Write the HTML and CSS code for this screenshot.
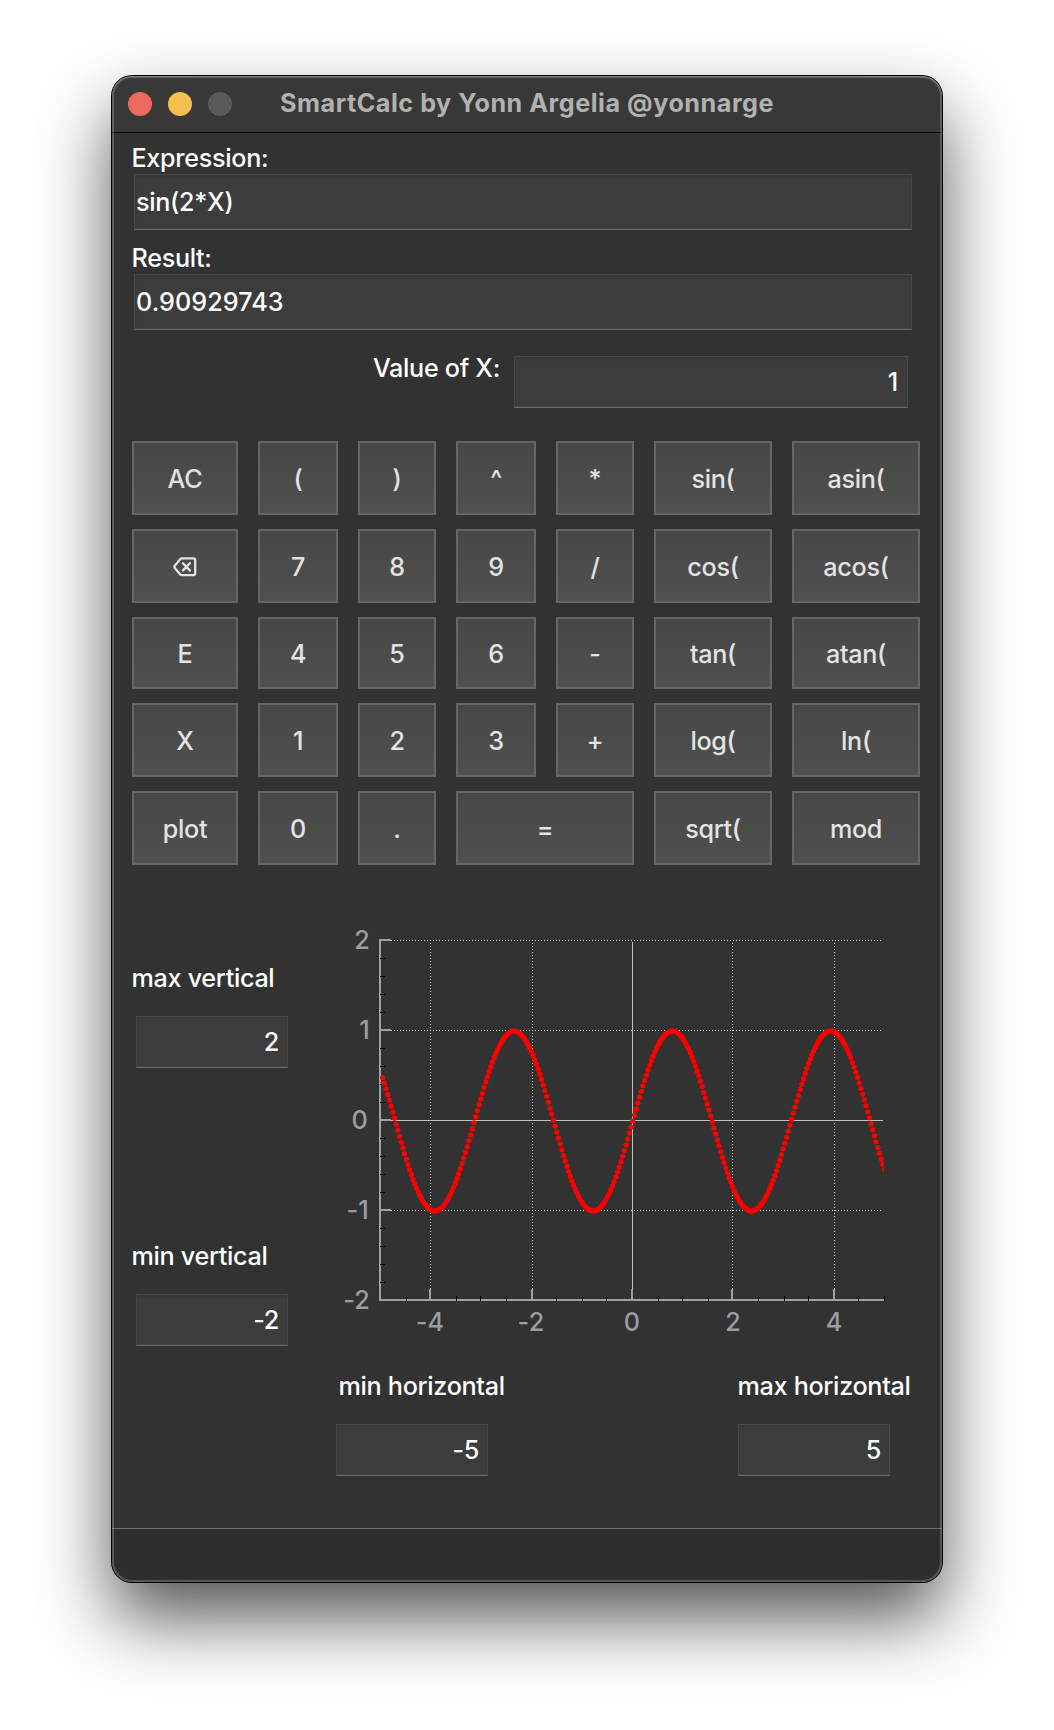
FILE: index.html
```html
<!DOCTYPE html>
<html lang="en">
<head>
<meta charset="utf-8">
<title>SmartCalc</title>
<link rel="stylesheet" href="styles.css">
</head>
<body>
<main class="window">
  <header class="titlebar">
    <span class="light light-close"></span>
    <span class="light light-min"></span>
    <span class="light light-off"></span>
    <h1 class="title">SmartCalc by Yonn Argelia @yonnarge</h1>
  </header>

  <div class="content">
    <section class="entry">
      <label class="label">Expression:</label>
      <div class="field field-wide">sin(2*X)</div>
    </section>
    <section class="entry">
      <label class="label">Result:</label>
      <div class="field field-wide"><span class="number">0.90929743</span></div>
    </section>
    <section class="x-row">
      <label class="label">Value of X:</label>
      <div class="field field-right field-x">1</div>
    </section>

    <section class="keypad">
      <button class="key">AC</button><button class="key">(</button><button class="key">)</button><button class="key">^</button><button class="key">*</button><button class="key">sin(</button><button class="key">asin(</button>
      <button class="key" aria-label="Backspace"><svg class="erase" width="24" height="20" viewBox="0 0 24 20"><path d="M8.8 1.4H20.2Q22.2 1.4 22.2 3.4V16.2Q22.2 18.2 20.2 18.2H8.8Q8 18.2 7.2 17.4L2 11.2Q.9 9.8 2 8.4L7.2 2.2Q8 1.4 8.8 1.4ZM10 6.2L16.8 13.4M16.8 6.2L10 13.4"/></svg></button><button class="key">7</button><button class="key">8</button><button class="key">9</button><button class="key">/</button><button class="key">cos(</button><button class="key">acos(</button>
      <button class="key">E</button><button class="key">4</button><button class="key">5</button><button class="key">6</button><button class="key">-</button><button class="key">tan(</button><button class="key">atan(</button>
      <button class="key">X</button><button class="key">1</button><button class="key">2</button><button class="key">3</button><button class="key">+</button><button class="key">log(</button><button class="key">ln(</button>
      <button class="key">plot</button><button class="key">0</button><button class="key">.</button><button class="key key-equals">=</button><button class="key">sqrt(</button><button class="key">mod</button>
    </section>

    <section class="graph">
      <div class="vertical">
        <div class="bound">
          <label class="label">max vertical</label>
          <div class="field field-right field-small">2</div>
        </div>
        <div class="bound">
          <label class="label">min vertical</label>
          <div class="field field-right field-small">-2</div>
        </div>
      </div>
      <svg class="chart" width="560" height="420" viewBox="330 920 560 420">
        <defs><clipPath id="plot-area"><rect x="380" y="939" width="504" height="362"/></clipPath></defs>
        <g class="grid-dots">
          <path d="M391 940.5H883M391 1030.5H883M391 1210.5H883"/>
          <path d="M430.5 943V1289M532.5 943V1289M732.5 943V1289M834.5 943V1289"/>
        </g>
        <path class="zero" d="M391 1120.5H883M632.5 942V1289"/>
        <path class="axis" d="M391 940H380V1300H884M380 1030H391M380 1120H391M380 1210H391M430 1300V1289M532 1300V1289M632 1300V1289M732 1300V1289M834 1300V1289"/>
        <path class="minor" d="M380 958.5h5M380 976.5h5M380 994.5h5M380 1012.5h5M380 1048.5h5M380 1066.5h5M380 1084.5h5M380 1102.5h5M380 1138.5h5M380 1156.5h5M380 1174.5h5M380 1192.5h5M380 1228.5h5M380 1246.5h5M380 1264.5h5M380 1282.5h5"/>
        <path class="minor" d="M406.5 1296v5M456.5 1296v5M480.5 1296v5M506.5 1296v5M556.5 1296v5M582.5 1296v5M606.5 1296v5M658.5 1296v5M682.5 1296v5M708.5 1296v5M758.5 1296v5M784.5 1296v5M808.5 1296v5M858.5 1296v5M884.5 1296v5"/>
        <g id="curve" class="curve" clip-path="url(#plot-area)"></g>
        <g class="tick-y">
          <text x="370" y="949">2</text><text x="370" y="1039">1</text><text x="368" y="1129">0</text><text x="369" y="1219">-1</text><text x="370" y="1309">-2</text>
        </g>
        <g class="tick-x">
          <text x="430" y="1331">-4</text><text x="531" y="1331">-2</text><text x="632" y="1331">0</text><text x="733" y="1331">2</text><text x="834" y="1331">4</text>
        </g>
      </svg>
    </section>

    <section class="horizontal">
      <div class="bound">
        <label class="label label-min">min horizontal</label>
        <div class="field field-right field-small">-5</div>
      </div>
      <div class="bound">
        <label class="label">max horizontal</label>
        <div class="field field-right field-small">5</div>
      </div>
    </section>
  </div>
  <footer class="status"></footer>
</main>
<script src="plot.js"></script>
</body>
</html>
```
FILE: plot.js
```js
// Scatter of sin(2x) over the visible range, one dot per sample.
const curve = document.getElementById("curve");
const originX = 632.8, originY = 1121, unitX = 50.4, unitY = 90, step = 1.69;
for (let i = -148; i <= 150; i++) {
  const dx = i * step;
  const dot = document.createElementNS("http://www.w3.org/2000/svg", "circle");
  dot.setAttribute("cx", (originX + dx).toFixed(2));
  dot.setAttribute("cy", (originY - unitY * Math.sin(2 * dx / unitX)).toFixed(2));
  dot.setAttribute("r", "2.6");
  curve.appendChild(dot);
}
```
FILE: styles.css
```css
* { box-sizing: border-box; }

body {
  margin: 0;
  padding: 76px 112px 147px;
  background: #fff;
  color: #fff;
  font-family: Inter, "Liberation Sans", sans-serif;
  font-size: 25.2px;
  font-weight: 500;
  letter-spacing: -.32px;
  overflow: hidden;
}

.window {
  position: relative;
  display: flex;
  flex-direction: column;
  width: 830px;
  height: 1506px;
  border-radius: 20px;
  background: #323232;
  box-shadow: 0 0 0 1px #000, 0 36px 72px rgba(0, 0, 0, .67);
}

/* light rim drawn over the title bar and status bar edges */
.window::after {
  content: "";
  position: absolute;
  inset: 0;
  border-radius: 20px;
  box-shadow: inset 0 1px 0 rgba(255, 255, 255, .2), inset 0 0 0 2px rgba(255, 255, 255, .2);
  pointer-events: none;
}

.titlebar {
  display: flex;
  align-items: center;
  gap: 16px;
  height: 57px;
  padding: 0 16px;
  border-bottom: 1px solid #000;
  border-radius: 20px 20px 0 0;
  background: #383838;
}

.light { width: 24px; height: 24px; border-radius: 50%; }
.light-close { background: #ec6a5e; }
.light-min { background: #f4bf4f; }
.light-off { background: #5a5a5a; }

.title {
  margin: 0 0 2px 32px;
  color: #b1b1b1;
  font-size: 25.2px;
  font-weight: 700;
  letter-spacing: .52px;
  white-space: nowrap;
}

.content { flex: 1; padding: 10px 20px 0; }

.entry { height: 100px; }
.entry + .entry { height: 87px; }

.label {
  display: block;
  height: 31px;
  line-height: 31px;
  margin-left: -.5px;
  white-space: nowrap;
}

.field {
  border: 1px solid #484848;
  border-bottom-color: #6a6a6a;
  background: #3c3c3c;
  box-shadow: inset 0 2px 2px rgba(0, 0, 0, .08), inset 0 -1px 0 #484848;
  height: 52px;
  line-height: 51px;
}
.field-wide { width: 778px; height: 56px; margin-left: 2px; padding-left: 1px; line-height: 55px; }
.number { letter-spacing: .05px; }
.field-right { padding-right: 8px; text-align: right; }
.field-small { width: 152px; }

.x-row { display: flex; justify-content: flex-end; gap: 14px; height: 111px; padding: 23px 14px 0 0; }
.field-x { width: 394px; margin-top: 3px; padding-right: 9px; }

.keypad {
  display: grid;
  grid-template-columns: 106px 80px 78px 80px 78px 118px 128px;
  grid-template-rows: 74px 74px 72px 74px 74px;
  gap: 14px 20px;
}
.key {
  display: flex;
  align-items: center;
  justify-content: center;
  padding: 2px 0 0;
  border: 2px solid #656565;
  background: linear-gradient(#474747, #505050);
  color: #e3e3e3;
  font: inherit;
  letter-spacing: inherit;
}
.key-equals { grid-column: span 2; }
.erase { fill: none; stroke: #e3e3e3; stroke-width: 2.3; stroke-linecap: round; }

.graph { display: flex; gap: 46px; height: 485px; padding-top: 55px; }
.vertical { display: flex; flex-direction: column; gap: 173px; width: 152px; padding-top: 43px; }
.vertical .field { margin: 22px 0 0 4px; }

.chart { display: block; flex: none; }
.grid-dots { stroke: #d0d0d0; stroke-dasharray: 1 2; fill: none; }
.zero { stroke: #c0c0c0; fill: none; }
.axis { stroke: #a09fa4; stroke-width: 2; fill: none; }
.minor { stroke: #000; }
.curve { fill: #f00; }
.chart text { fill: #9d9da1; letter-spacing: .2px; }
.tick-y { text-anchor: end; }
.tick-x { text-anchor: middle; }

.horizontal { display: flex; justify-content: space-between; padding: 21px 32px 0 204px; }
.horizontal .bound { width: 152px; }
.horizontal .field { margin-top: 22px; }
.label-min { padding-left: 3px; }

.status {
  height: 54px;
  border-top: 1px solid #707070;
  border-radius: 0 0 20px 20px;
  background: #2e2e2e;
}
```
